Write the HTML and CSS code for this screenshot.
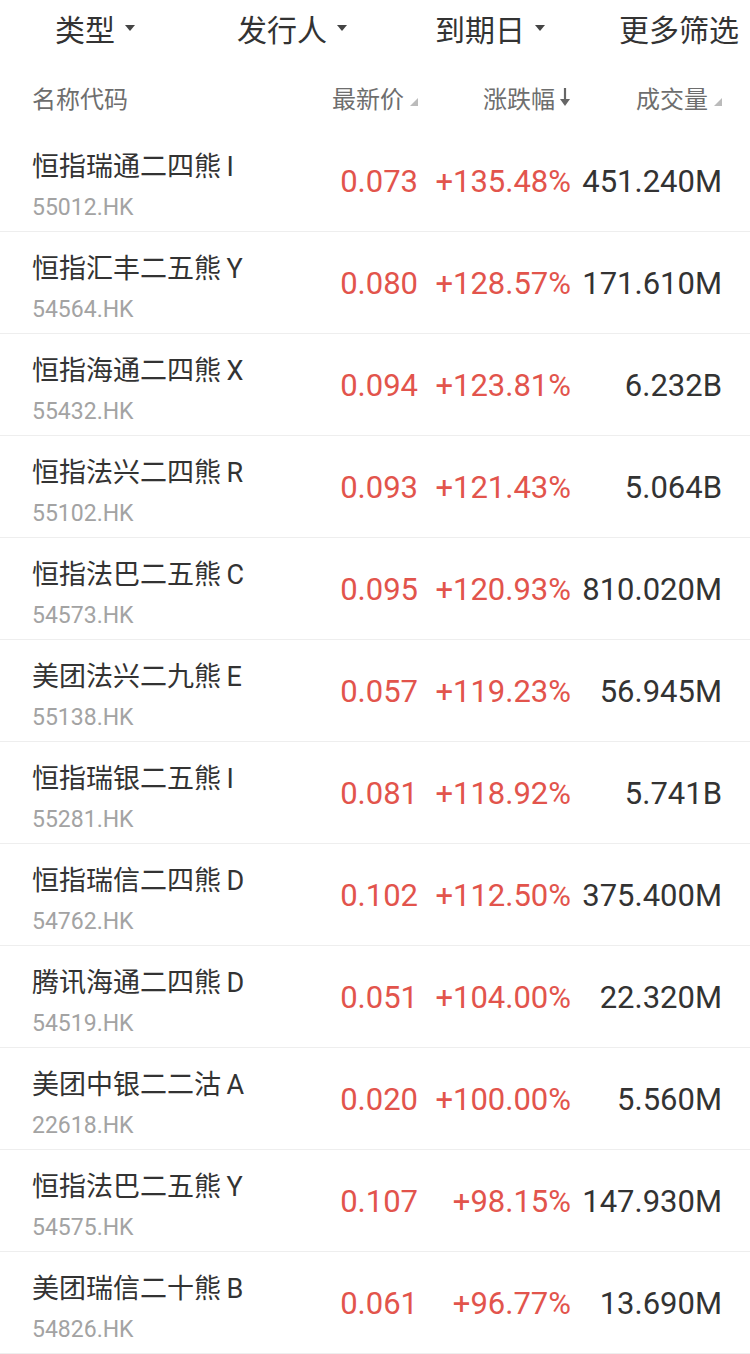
FILE: index.html
```html
<!DOCTYPE html>
<html lang="zh-CN">
<head>
  <meta charset="UTF-8">
  <meta name="viewport" content="width=device-width, initial-scale=1.0">
  <title>牛熊证</title>
  <link rel="stylesheet" href="styles.css">
</head>
<body>
  <div class="filters">
    <div class="filter filter-type">类型 <span class="caret"></span></div>
    <div class="filter filter-issuer">发行人 <span class="caret"></span></div>
    <div class="filter filter-expiry">到期日 <span class="caret"></span></div>
    <div class="filter filter-more">更多筛选</div>
  </div>

  <div class="head">
    <div class="col-name">名称代码</div>
    <div class="col-num">最新价<span class="sort"></span></div>
    <div class="col-num">涨跌幅<svg class="arrow" width="12" height="20" viewBox="0 0 12 20"><path d="M6 1V17" stroke="#666" stroke-width="2.2"/><path d="M1 12L6 19L11 12Z" fill="#666"/></svg></div>
    <div class="col-num">成交量<span class="sort"></span></div>
  </div>

  <div class="list">
    <div class="row">
      <div class="name"><div class="title">恒指瑞通二四熊&thinsp;I</div><div class="code">55012.HK</div></div>
      <div class="price up">0.073</div>
      <div class="change up">+135.48%</div>
      <div class="volume">451.240M</div>
    </div>
    <div class="row">
      <div class="name"><div class="title">恒指汇丰二五熊&thinsp;Y</div><div class="code">54564.HK</div></div>
      <div class="price up">0.080</div>
      <div class="change up">+128.57%</div>
      <div class="volume">171.610M</div>
    </div>
    <div class="row">
      <div class="name"><div class="title">恒指海通二四熊&thinsp;X</div><div class="code">55432.HK</div></div>
      <div class="price up">0.094</div>
      <div class="change up">+123.81%</div>
      <div class="volume">6.232B</div>
    </div>
    <div class="row">
      <div class="name"><div class="title">恒指法兴二四熊&thinsp;R</div><div class="code">55102.HK</div></div>
      <div class="price up">0.093</div>
      <div class="change up">+121.43%</div>
      <div class="volume">5.064B</div>
    </div>
    <div class="row">
      <div class="name"><div class="title">恒指法巴二五熊&thinsp;C</div><div class="code">54573.HK</div></div>
      <div class="price up">0.095</div>
      <div class="change up">+120.93%</div>
      <div class="volume">810.020M</div>
    </div>
    <div class="row">
      <div class="name"><div class="title">美团法兴二九熊&thinsp;E</div><div class="code">55138.HK</div></div>
      <div class="price up">0.057</div>
      <div class="change up">+119.23%</div>
      <div class="volume">56.945M</div>
    </div>
    <div class="row">
      <div class="name"><div class="title">恒指瑞银二五熊&thinsp;I</div><div class="code">55281.HK</div></div>
      <div class="price up">0.081</div>
      <div class="change up">+118.92%</div>
      <div class="volume">5.741B</div>
    </div>
    <div class="row">
      <div class="name"><div class="title">恒指瑞信二四熊&thinsp;D</div><div class="code">54762.HK</div></div>
      <div class="price up">0.102</div>
      <div class="change up">+112.50%</div>
      <div class="volume">375.400M</div>
    </div>
    <div class="row">
      <div class="name"><div class="title">腾讯海通二四熊&thinsp;D</div><div class="code">54519.HK</div></div>
      <div class="price up">0.051</div>
      <div class="change up">+104.00%</div>
      <div class="volume">22.320M</div>
    </div>
    <div class="row">
      <div class="name"><div class="title">美团中银二二沽&thinsp;A</div><div class="code">22618.HK</div></div>
      <div class="price up">0.020</div>
      <div class="change up">+100.00%</div>
      <div class="volume">5.560M</div>
    </div>
    <div class="row">
      <div class="name"><div class="title">恒指法巴二五熊&thinsp;Y</div><div class="code">54575.HK</div></div>
      <div class="price up">0.107</div>
      <div class="change up">+98.15%</div>
      <div class="volume">147.930M</div>
    </div>
    <div class="row">
      <div class="name"><div class="title">美团瑞信二十熊&thinsp;B</div><div class="code">54826.HK</div></div>
      <div class="price up">0.061</div>
      <div class="change up">+96.77%</div>
      <div class="volume">13.690M</div>
    </div>
  </div>
</body>
</html>
```

FILE: styles.css
```css
body {
  font-family: Roboto, "Noto Sans CJK SC", sans-serif;
  background-color: #fff;
  color: #333;
  margin: 0;
  padding: 0;
}
.filters {
  display: flex;
  height: 56px;
  align-items: center;
  font-size: 30px;
  color: #333;
}
.filter {
  display: flex;
  align-items: center;
  white-space: nowrap;
}
.filter-type {
  margin-left: 55px;
}
.filter-issuer {
  margin-left: 102px;
}
.filter-expiry {
  margin-left: 88px;
}
.filter-more {
  margin-left: 74px;
}
.caret {
  width: 0;
  height: 0;
  margin-left: 10px;
  border-left: 5px solid transparent;
  border-right: 5px solid transparent;
  border-top: 6px solid #444;
}
.head,
.row {
  display: grid;
  grid-template-columns: 1fr 110px 153px 151px;
  padding: 0 28px 0 32px;
  align-items: center;
}
.head {
  height: 74px;
  font-size: 24px;
  color: #6e6e6e;
  padding-top: 8px;
  box-sizing: border-box;
}
.col-num {
  display: flex;
  justify-content: flex-end;
  align-items: center;
}
.sort {
  width: 0;
  height: 0;
  margin: 10px 0 0 6px;
  border-left: 8px solid transparent;
  border-bottom: 8px solid #bbb;
}
.arrow {
  margin-left: 4px;
}
.row {
  height: 101px;
  border-bottom: 1px solid #eee;
}
.title {
  font-size: 27px;
  color: #333;
  white-space: nowrap;
  line-height: 32px;
  margin-top: 12px;
}
.code {
  font-size: 23px;
  color: #a3a3a3;
  margin-top: 11px;
  line-height: 28px;
}
.price,
.change,
.volume {
  font-size: 31px;
  text-align: right;
  margin-top: 2px;
}
.up {
  color: #e2544c;
}
.volume {
  color: #333;
}
```
